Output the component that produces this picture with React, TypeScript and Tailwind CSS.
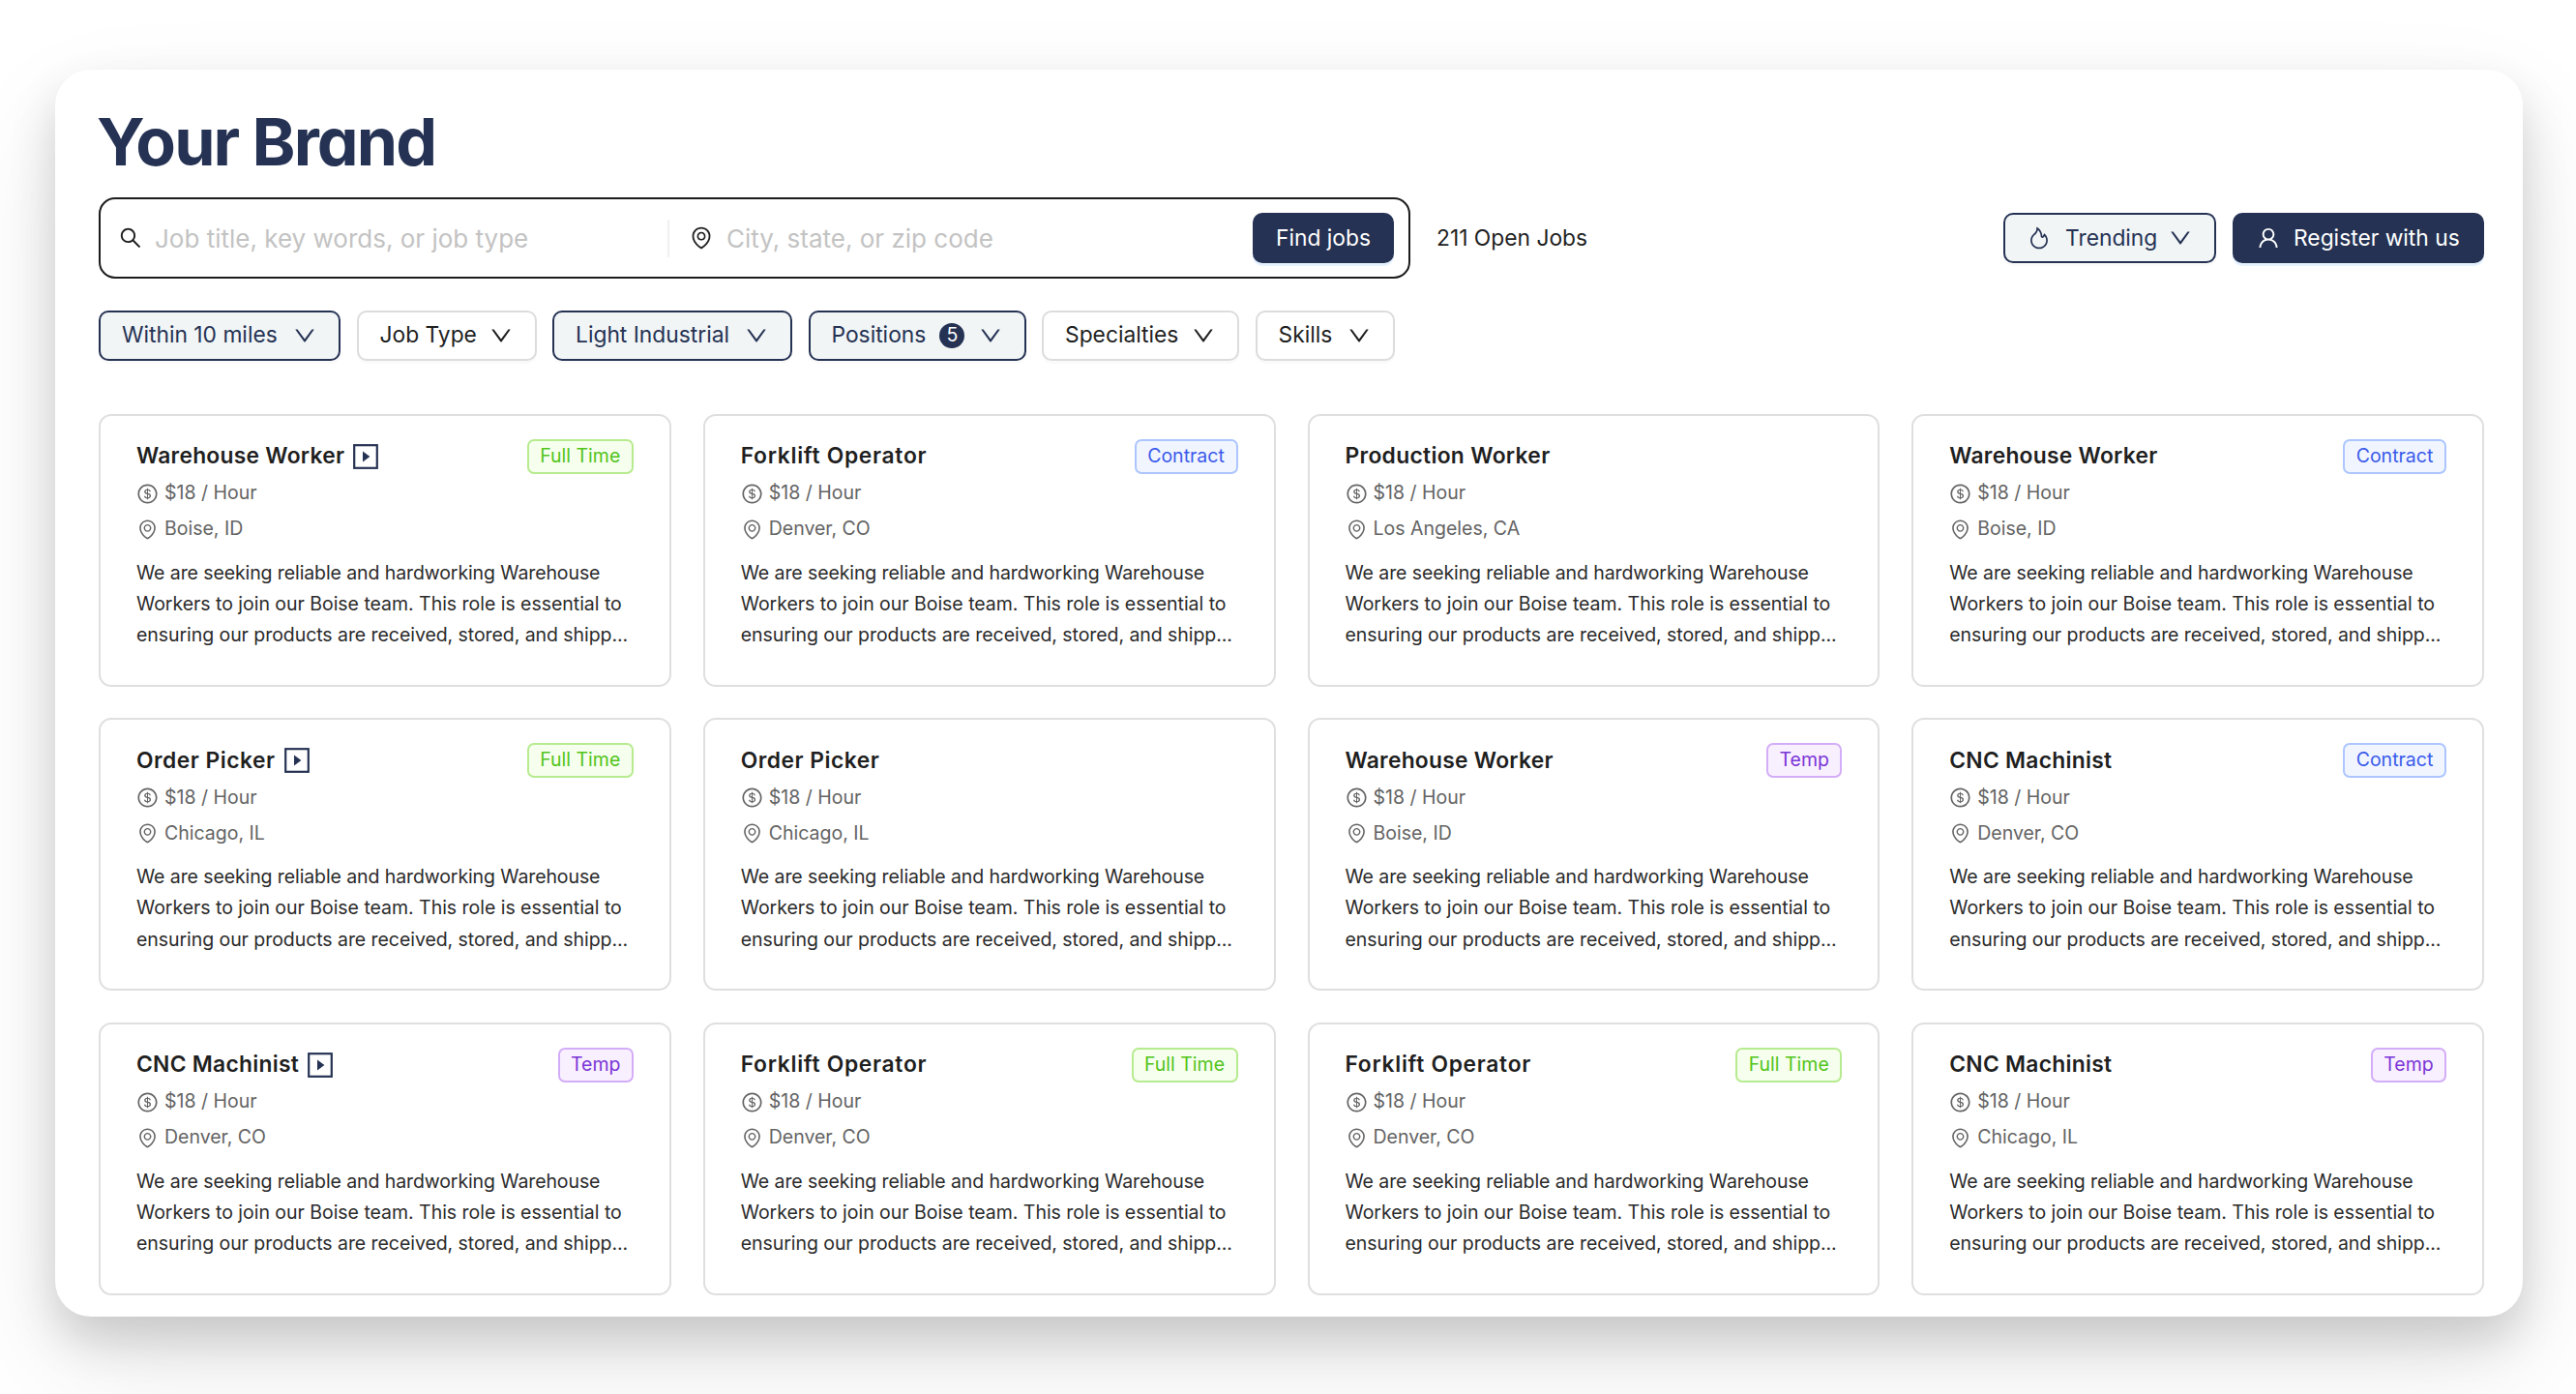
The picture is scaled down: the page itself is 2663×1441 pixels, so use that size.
import clsx from "clsx";
import {
  AiOutlineDollar,
  AiOutlineDown,
  AiOutlineEnvironment,
  AiOutlineFire,
  AiOutlineSearch,
  AiOutlineUser,
} from "react-icons/ai";

const FILTERS = [
  { label: "Within 10 miles", active: true, width: "w-[250px]" },
  { label: "Job Type", active: false, width: "w-[186px]" },
  { label: "Light Industrial", active: true, width: "w-[248px]" },
  { label: "Positions", active: true, count: 5, width: "w-[225px]" },
  { label: "Specialties", active: false, width: "w-[204px]" },
  { label: "Skills", active: false, width: "w-[144px]" },
];

type Tag = "Full Time" | "Contract" | "Temp";

const TAG_STYLES: Record<Tag, string> = {
  "Full Time": "w-[110px] border-[#b7eb8f] bg-[#f6ffed] text-[#52c41a]",
  Contract: "w-[107px] border-[#adc6ff] bg-[#f0f5ff] text-[#3b5bea]",
  Temp: "w-[78px] border-[#d3adf7] bg-[#f9f0ff] text-[#7a35d6]",
};

// narrow letters (f, l, i, t, r) need a bit more air
const TITLE_TRACKING: Record<string, string> = {
  "Warehouse Worker": "tracking-[0.26px]",
  "Forklift Operator": "tracking-[0.7px]",
  "Production Worker": "tracking-[0.32px]",
  "Order Picker": "tracking-[0.5px]",
  "CNC Machinist": "tracking-[0.28px]",
};

const JOBS: { title: string; place: string; tag?: Tag; video?: boolean }[] = [
  { title: "Warehouse Worker", place: "Boise, ID", tag: "Full Time", video: true },
  { title: "Forklift Operator", place: "Denver, CO", tag: "Contract" },
  { title: "Production Worker", place: "Los Angeles, CA" },
  { title: "Warehouse Worker", place: "Boise, ID", tag: "Contract" },
  { title: "Order Picker", place: "Chicago, IL", tag: "Full Time", video: true },
  { title: "Order Picker", place: "Chicago, IL" },
  { title: "Warehouse Worker", place: "Boise, ID", tag: "Temp" },
  { title: "CNC Machinist", place: "Denver, CO", tag: "Contract" },
  { title: "CNC Machinist", place: "Denver, CO", tag: "Temp", video: true },
  { title: "Forklift Operator", place: "Denver, CO", tag: "Full Time" },
  { title: "Forklift Operator", place: "Denver, CO", tag: "Full Time" },
  { title: "CNC Machinist", place: "Chicago, IL", tag: "Temp" },
];

const DESCRIPTION = [
  { text: "We are seeking reliable and hardworking Warehouse", tracking: "tracking-[-0.1px]" },
  { text: "Workers to join our Boise team. This role is essential to", tracking: "tracking-[-0.03px]" },
  { text: "ensuring our products are received, stored, and shipp...", tracking: "tracking-[-0.06px]" },
];

function VideoIcon() {
  return (
    <svg viewBox="0 0 26 26" className="ml-[9px] size-[26px] text-[#253253]">
      <rect x="1.2" y="1.2" width="23.6" height="23.6" fill="none" stroke="currentColor" strokeWidth="2.2" />
      <path d="M10 7.4v11.2l7.4-5.6z" fill="currentColor" />
    </svg>
  );
}

function JobCard({ title, place, tag, video }: (typeof JOBS)[number]) {
  return (
    <article className="h-[282px] rounded-[13px] border-2 border-[#dfdfdf] px-[37px] pt-[24px]">
      <div className="flex h-[36px] items-center">
        <h2 className={clsx("text-[22.8px] font-semibold whitespace-nowrap text-[#1f1f1f]", TITLE_TRACKING[title])}>{title}</h2>
        {video && <VideoIcon />}
        {tag && (
          <span className={clsx("ml-auto flex h-[36px] items-center justify-center rounded-[7px] border-2 text-[19.5px]", TAG_STYLES[tag])}>
            {tag}
          </span>
        )}
      </div>
      <p className="mt-[2px] flex h-[37px] items-center text-[19.5px] text-[#646464]">
        <AiOutlineDollar className="mr-[6px] size-[23px]" />
        $18 / Hour
      </p>
      <p className="flex h-[37px] items-center text-[19.5px] text-[#646464]">
        <AiOutlineEnvironment className="mr-[6px] size-[23px]" />
        {place}
      </p>
      <div className="mt-[10px] text-[19.5px] leading-[32.4px] whitespace-nowrap text-[#2b2b2b]">
        {DESCRIPTION.map((line) => (
          <p key={line.text} className={line.tracking}>{line.text}</p>
        ))}
      </div>
    </article>
  );
}

export default function App() {
  return (
    <div className="h-[1441px] w-[2663px] overflow-hidden bg-white pt-[72px] pl-[57px] font-['Inter',sans-serif]">
      <main className="h-[1289px] w-[2551px] rounded-[37px] bg-white pr-[40px] pl-[45px] shadow-[0_24px_48px_rgba(0,0,0,0.16),0_50px_120px_rgba(0,0,0,0.09)]">
        <header className="h-[132px] pt-[34px]">
          <h1 className="-ml-[2px] text-[68px] leading-[80px] font-bold tracking-[-1.9px] whitespace-nowrap text-[#253253] [font-feature-settings:'cv11']">
            Your Brand
          </h1>
        </header>

        <div className="flex h-[84px] items-center">
          <div className="flex h-[84px] w-[1356px] items-center rounded-[17px] border-2 border-[#1c1c1c] pr-[15px] pl-[18px] text-[26px]">
            <div className="flex w-[568px] items-center text-[#c3c3c3]">
              <AiOutlineSearch className="mr-[12px] size-[26px] text-[#1f1f1f]" />
              Job title, key words, or job type
            </div>
            <div className="h-[39px] w-[2px] bg-[#f0f0f0]" />
            <div className="flex flex-1 items-center pl-[20px] text-[#c3c3c3]">
              <AiOutlineEnvironment className="mr-[13px] size-[26px] text-[#1f1f1f]" />
              City, state, or zip code
            </div>
            <button className="h-[52px] w-[146px] rounded-[10px] bg-[#253253] text-[22.8px] text-white shadow-[0_3px_0_#e6f1ff]">
              Find jobs
            </button>
          </div>
          <p className="ml-[27px] text-[22.8px] text-[#1f1f1f]">211 Open Jobs</p>
          <div className="ml-auto flex gap-[17px] text-[22.8px]">
            <button className="flex h-[52px] w-[220px] items-center rounded-[10px] border-2 border-[#253253] bg-[#f1f5f6] pl-[22px] text-[#253253] shadow-[0_3px_0_#fafafa]">
              <AiOutlineFire className="mr-[14px] size-[26px]" />
              Trending
              <AiOutlineDown className="mr-[22px] ml-auto size-[26px]" />
            </button>
            <button className="flex h-[52px] w-[260px] items-center rounded-[10px] bg-[#253253] pl-[24px] text-white shadow-[0_3px_0_#e6f1ff]">
              <AiOutlineUser className="mr-[13px] size-[26px]" />
              Register with us
            </button>
          </div>
        </div>

        <nav className="mt-[32.5px] flex gap-[16.5px]">
          {FILTERS.map((f) => (
            <button
              key={f.label}
              className={clsx(
                "flex h-[52px] items-center rounded-[10px] border-2 px-[22px] text-[22.8px] whitespace-nowrap shadow-[0_3px_0_#fafafa]",
                f.width,
                f.active ? "border-[#253253] bg-[#f1f5f6] text-[#253253]" : "border-[#dcdcdc] bg-white text-[#1f1f1f]",
              )}
            >
              {f.label}
              {f.count && (
                <span className="ml-[14px] flex size-[26px] items-center justify-center rounded-full bg-[#253253] text-[19.5px] text-white">
                  {f.count}
                </span>
              )}
              <AiOutlineDown className="ml-auto size-[26px]" />
            </button>
          ))}
        </nav>

        <section className="mt-[55px] grid grid-cols-4 gap-x-[33px] gap-y-[32.5px]">
          {JOBS.map((job, i) => (
            <JobCard key={i} {...job} />
          ))}
        </section>
      </main>
    </div>
  );
}
